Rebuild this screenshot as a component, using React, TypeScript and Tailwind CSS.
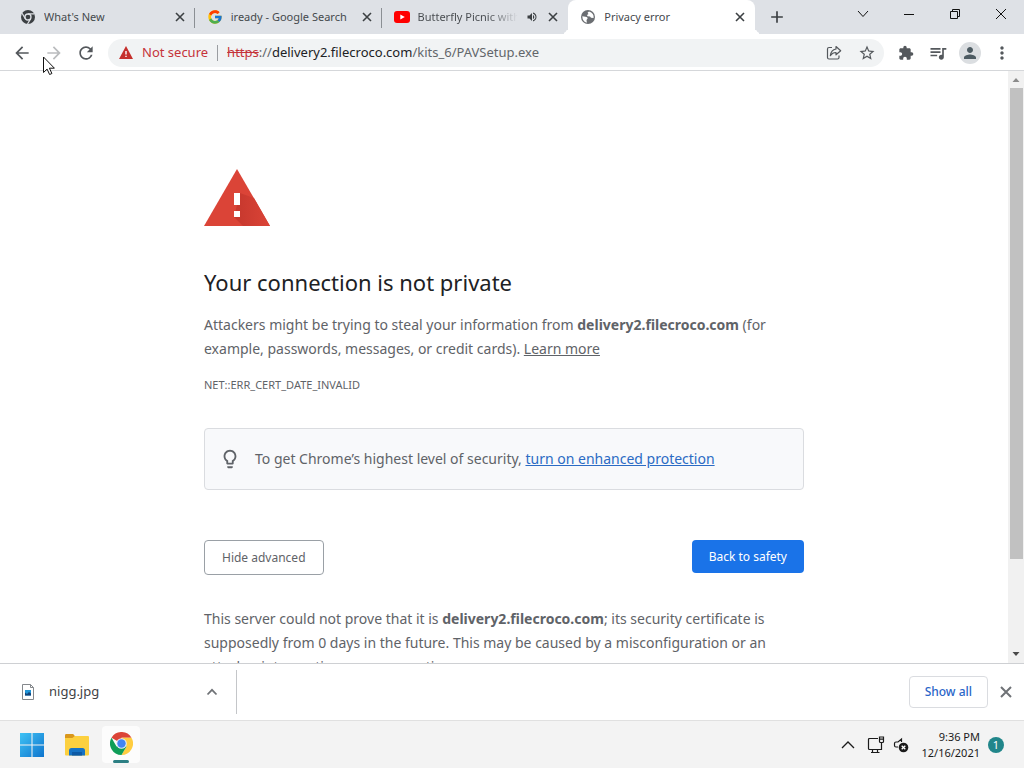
import React from 'react';
import {
    MdArrowBack,
    MdArrowForward,
    MdRefresh,
    MdStarBorder,
    MdExtension,
    MdQueueMusic,
    MdPerson,
    MdMoreVert,
    MdAdd,
    MdVolumeUp,
    MdLightbulbOutline,
} from 'react-icons/md';
import { FcGoogle } from 'react-icons/fc';

const ChromeGrey = () => (
    <svg viewBox="0 0 16 16" className="size-4 shrink-0">
        <circle cx="8" cy="8" r="7" fill="#3c4043" />
        <circle cx="8" cy="8" r="3" fill="#3c4043" stroke="#dee1e6" strokeWidth="1.3" />
        <path d="M8 4.9h6.4M5.3 9.6 2.1 4.3M10.7 9.6 7.5 15" stroke="#dee1e6" strokeWidth="1.2" />
    </svg>
);

const YouTube = () => (
    <svg viewBox="0 0 16 12" className="w-4 h-3 shrink-0">
        <rect width="16" height="12" rx="3" fill="#f00" />
        <path d="M6.3 3.4v5.2L10.8 6z" fill="#fff" />
    </svg>
);

const Globe = () => (
    <svg viewBox="0 0 16 16" className="size-4 shrink-0">
        <circle cx="8" cy="8" r="7" fill="#6b6e72" />
        <path d="M2.300 7.200 5.500 7.800Q7.800 8 7.600 9.600L6.500 11l.4 2.700Q2.400 12.500 2.300 7.200z" fill="#fff" />
        <path d="M9 2.400 7.500 3.800l1 1.300-1.500 1 .5 1.200 2.500.2 1 1.300 2.600.3Q14.200 4 9 2.400z" fill="#fff" />
    </svg>
);

const ChromeLogo = () => (
    <svg viewBox="0 0 48 48" className="size-[23px]">
        <path d="M24 24 3.2 12A24 24 0 0 1 44.8 12H24z" fill="#db4437" />
        <path d="M24 12h20.8A24 24 0 0 1 24 48l10.4-18z" fill="#ffcd40" />
        <path d="M3.2 12A24 24 0 0 0 24 48l10.4-18L24 24 13.6 30z" fill="#0f9d58" />
        <circle cx="24" cy="24" r="11" fill="#e8eef7" />
        <circle cx="24" cy="24" r="8.8" fill="#4285f4" />
    </svg>
);

const WindowsLogo = () => (
    <svg viewBox="0 0 23 23" className="size-6">
        <defs>
            <linearGradient id="win" x1="0" y1="0" x2="1" y2="1">
                <stop offset="0" stopColor="#3fc3f5" />
                <stop offset="1" stopColor="#0f74cd" />
            </linearGradient>
        </defs>
        <path d="M0 0h11v11H0zM12 0h11v11H12zM0 12h11v11H0zM12 12h11v11H12z" fill="url(#win)" />
    </svg>
);

const Folder = () => (
    <svg viewBox="0 0 24 22" className="w-6 h-[22px]">
        <path d="M0 1.2Q0 0 1.2 0h7l2 2.4L8 5H0z" fill="#d9971c" />
        <path d="M0 4h7.4l2.4-2H23q1 0 1 1v17.500q0 1-1 1H1q-1 0-1-1z" fill="#fcd03f" />
        <path d="M4 21.500v-5Q4 14 6.500 14h11q2.500 0 2.500 2.500v5z" fill="#1673c5" />
        <path d="M7 18h10v3.500H7z" fill="#0d5aa5" />
    </svg>
);

const tabs = [
    { title: "What's New", icon: <ChromeGrey /> },
    { title: 'iready - Google Search', icon: <FcGoogle className="size-4 shrink-0" /> },
    { title: 'Butterfly Picnic with', icon: <YouTube />, audio: true },
    { title: 'Privacy error', icon: <Globe />, active: true },
];

const TabStrip = () => (
    <div className="flex h-[34px] shrink-0 bg-[#dee1e6] pl-2">
        <div role="tablist" className="flex min-w-0 flex-1 max-w-[747px]">
            {tabs.map(({ title, icon, audio, active }, i) => (
                <div
                    key={title}
                    className={
                        active
                            ? 'relative flex flex-1 min-w-0 items-center rounded-t-lg bg-white pl-3 pr-2 before:absolute before:bottom-0 before:-left-2 before:size-2 before:rounded-br-lg before:shadow-[4px_4px_0_white] after:absolute after:bottom-0 after:-right-2 after:size-2 after:rounded-bl-lg after:shadow-[-4px_4px_0_white]'
                            : 'relative flex flex-1 min-w-0 items-center pl-3 pr-2'
                    }
                >
                    {icon}
                    <button role="tab" aria-selected={!!active} className="ml-2 flex-1 min-w-0 overflow-hidden whitespace-nowrap text-left text-[11px] text-[#45494d]">
                        <span className={audio ? 'block overflow-hidden bg-linear-to-r from-[#45494d] from-70% to-transparent bg-clip-text text-transparent' : ''}>
                            {title}
                        </span>
                    </button>
                    {audio && <MdVolumeUp className="ml-2 size-3 shrink-0 text-[#3c4043]" />}
                    <button aria-label={`Close ${title}`} className="ml-2 shrink-0 text-[#3c4043]">
                        <svg viewBox="0 0 14 14" className="size-[14px]" stroke="currentColor" strokeWidth="1.600"><path d="m3 3 8 8M11 3l-8 8" /></svg>
                    </button>
                    {i < 2 && <span className="absolute right-0 top-2 h-5 w-px bg-[#8b8f94]" />}
                </div>
            ))}
        </div>
        <button aria-label="New tab" className="ml-3 text-[#3c4043]">
            <MdAdd className="size-5" />
        </button>
        <div className="ml-auto flex h-7 items-center">
            <button aria-label="Search tabs" className="flex w-[46px] justify-center">
                <svg viewBox="0 0 12 8" className="w-3 h-2" fill="none" stroke="#111"><path d="m1 1 5 5.500L11 1" /></svg>
            </button>
            <button aria-label="Minimize" className="flex w-[46px] justify-center">
                <svg viewBox="0 0 10 10" className="size-[10px]" stroke="#111"><path d="M0 5.500h10" /></svg>
            </button>
            <button aria-label="Restore" className="flex w-[46px] justify-center">
                <svg viewBox="0 0 10 10" className="size-[10px]" fill="none" stroke="#111"><path d="M.5 2.500h7v7h-7zM2.500 2.500v-2h7v7h-2" /></svg>
            </button>
            <button aria-label="Close" className="flex w-[46px] justify-center">
                <svg viewBox="0 0 10 10" className="size-[10px]" stroke="#111"><path d="m0 0 10 10M10 0 0 10" /></svg>
            </button>
        </div>
    </div>
);

const Toolbar = () => (
    <div className="flex h-[37px] shrink-0 items-center border-b border-[#d5d7da] bg-white pl-3 pr-3 pt-px text-[#54585c]">
        <button aria-label="Back"><MdArrowBack className="size-5" /></button>
        <button aria-label="Forward" disabled className="ml-3 text-[#babcbe]"><MdArrowForward className="size-5" /></button>
        <button aria-label="Reload" className="ml-3"><MdRefresh className="size-5" /></button>
        <div className="ml-3 flex h-7 flex-1 min-w-0 items-center rounded-full bg-[#f1f3f4] pl-[11px] pr-2 text-[13px]">
            <button className="flex items-center text-[#c5343a]">
                <svg viewBox="0 0 14 13" className="mr-[9px] w-[14px] h-[13px]">
                    <path d="M7 0 14 13H0z" fill="#c5302c" />
                    <path d="M6.300 5h1.400v3.500H6.300zM6.300 9.700h1.400v1.400H6.300z" fill="#fff" />
                </svg>
                Not secure
            </button>
            <span className="mx-[9px] h-4 w-px bg-[#9a9da1]" />
            <div role="textbox" aria-label="Address" contentEditable suppressContentEditableWarning className="flex-1 min-w-0 truncate text-[#62666a] outline-none">
                <span className="text-[#c5343a] line-through">https</span>
                ://<span className="text-[#202124]">delivery2.filecroco.com</span>/kits_6/PAVSetup.exe
            </div>
            <button aria-label="Share this page">
                <svg viewBox="0 0 16 16" className="size-4" fill="none" stroke="currentColor" strokeWidth="1.200" strokeLinejoin="round">
                    <path d="M6 2.500H3Q1.500 2.500 1.500 4v8.500Q1.500 14 3 14h8.500q1.500 0 1.500-1.500V10.500" />
                    <path d="M10 1.500 14.700 5.700 10 9.800V7.500Q6.500 7.400 4.300 10.700 5 5 10 4z" />
                </svg>
            </button>
            <button aria-label="Bookmark this page" className="ml-4"><MdStarBorder className="size-[18px]" /></button>
        </div>
        <button aria-label="Extensions" className="ml-[14px]"><MdExtension className="size-4" /></button>
        <button aria-label="Media controls" className="ml-[14px]"><MdQueueMusic className="size-5" /></button>
        <button aria-label="Profile" className="ml-[11px] flex size-[22px] items-center justify-center rounded-full bg-[#dbdee1] text-[#4d5b62]">
            <MdPerson className="size-[18px]" />
        </button>
        <button aria-label="Menu" className="ml-[11px]"><MdMoreVert className="size-5" /></button>
    </div>
);

const PrivacyError = () => (
    <main className="flex min-h-0 flex-1 overflow-hidden bg-white">
        <div className="min-w-0 flex-1 px-6">
            <div className="mx-auto max-w-[600px] pt-[98px] text-sm leading-6 text-[#5f6368]">
                <svg viewBox="0 0 66 57" className="w-[66px] h-[57px]">
                    <defs>
                        <linearGradient id="fold" x1="0" y1="0" x2="1" y2="0">
                            <stop offset="0" stopColor="#c5372d" />
                            <stop offset="1" stopColor="#db4437" />
                        </linearGradient>
                    </defs>
                    <path d="M33 0 66 57H0z" fill="#db4437" />
                    <path d="m36 24 14 5 16 28H39l-9-9z" fill="url(#fold)" />
                    <path d="M30 24h6v12h-6zM30 42h6v6h-6z" fill="#fff" />
                </svg>
                <h1 className="mt-10 text-[22px] leading-8 text-[#202124]">Your connection is not private</h1>
                <p className="mt-[15px]">
                    Attackers might be trying to steal your information from <b>delivery2.filecroco.com</b> (for example, passwords, messages, or credit cards).{' '}
                    <a href="#learn" className="underline">Learn more</a>
                </p>
                <p className="mt-[14px] text-[11px] leading-5">NET::ERR_CERT_DATE_INVALID</p>
                <div className="mt-[33px] flex items-center rounded border border-[#dadce0] bg-[#f8f9fb] px-[14px] py-[18px]">
                    <MdLightbulbOutline className="size-[22px] shrink-0" />
                    <p className="ml-[14px]">
                        To get Chrome’s highest level of security,{' '}
                        <a href="#enhanced" className="text-[#2b6bc4] underline">turn on enhanced protection</a>
                    </p>
                </div>
                <div className="mt-[50px] flex items-start justify-between text-xs">
                    <button className="h-[35px] rounded border border-[#9aa0a6] px-[17px]">Hide advanced</button>
                    <button className="h-[33px] rounded bg-[#1a73e8] px-[17px] text-white">Back to safety</button>
                </div>
                <p className="mt-8">
                    This server could not prove that it is <b>delivery2.filecroco.com</b>; its security certificate is supposedly from 0 days in the future. This may be caused by a misconfiguration or an attacker intercepting your connection.
                </p>
            </div>
        </div>
        {/* Scrollbar */}
        <div className="flex w-4 shrink-0 flex-col items-center bg-[#f1f1f1]">
            <svg viewBox="0 0 16 17" className="w-4 h-[17px] shrink-0"><path d="M4.500 11h7L8 7z" fill="#8b8b8b" /></svg>
            <div className="h-[79.5%] w-[13px] bg-[#c1c1c1]" />
            <svg viewBox="0 0 16 17" className="mt-auto w-4 h-[17px] shrink-0"><path d="M4.500 6h7L8 10z" fill="#4a4a4a" /></svg>
        </div>
    </main>
);

const DownloadShelf = () => (
    <div className="flex h-[57px] shrink-0 items-center border-t border-[#ced0d3] bg-white pr-2">
        <div className="flex h-11 w-[237px] items-center border-r border-[#c4c6c9] pl-5 pr-4">
            <svg viewBox="0 0 16 16" className="size-4">
                <path d="M2.500.5h8l3 3v12h-11z" fill="#fff" stroke="#85888c" />
                <path d="M10.500.5v3h3" fill="none" stroke="#85888c" />
                <path d="M5 6h6v5.500H5z" fill="#2196d8" />
                <path d="m5 8.500 2 1.500 2-2 2 1.500v2H5z" fill="#15457a" />
            </svg>
            <button className="ml-[13px] text-[13px] text-[#3f4246]">nigg.jpg</button>
            <button aria-label="Download options" className="ml-auto text-[#6f7276]">
                <svg viewBox="0 0 16 16" className="size-4" fill="none" stroke="currentColor" strokeWidth="1.800"><path d="m3.500 10.500 4.500-4.700 4.500 4.700" /></svg>
            </button>
        </div>
        <button className="ml-auto h-8 rounded border border-[#dadce0] px-[15px] text-xs font-medium text-[#2a66c8]">Show all</button>
        <button aria-label="Close downloads" className="ml-2 text-[#6f7276]">
            <svg viewBox="0 0 20 20" className="size-5" stroke="currentColor" strokeWidth="2"><path d="m5 5 10 10M15 5 5 15" /></svg>
        </button>
    </div>
);

const Taskbar = () => (
    <div className="flex h-12 shrink-0 items-center border-t border-[#e0e0e0] bg-[#f3f3f3] pl-5 pr-5 text-[#1b1b1b]">
        <button aria-label="Start"><WindowsLogo /></button>
        <button aria-label="File Explorer" className="ml-[21px]"><Folder /></button>
        <button aria-label="Google Chrome" className="ml-[13px] flex h-[37px] w-[38px] flex-col items-center justify-between rounded bg-[#fcfcfc] pt-[6px]">
            <ChromeLogo />
            <span className="h-[3px] w-4 rounded-full bg-[#2c7f83]" />
        </button>
        <button aria-label="Show hidden icons" className="ml-auto">
            <svg viewBox="0 0 14 14" className="size-[14px]" fill="none" stroke="currentColor" strokeWidth="1.300"><path d="m1 10 6-6 6 6" /></svg>
        </button>
        <button aria-label="Network" className="ml-3">
            <svg viewBox="0 0 18 18" className="size-[18px]" fill="none" stroke="currentColor" strokeWidth="1.200">
                <path d="M11 2.500H2.500q-1 0-1 1v9q0 1 1 1h12V7M5.500 13.500v3M10.500 13.500v3M4 16.500h8.500" />
                <path d="M12.500 1h4v4.500q0 1-1 1h-2q-1 0-1-1zM12.500 3.200h4" />
            </svg>
        </button>
        <button aria-label="Volume" className="ml-2">
            <svg viewBox="0 0 16 16" className="size-4">
                <path d="M8.500 5V2L5 5H3Q1.500 5 1.500 6.500v2Q1.500 10 3 10h2" fill="none" stroke="currentColor" strokeWidth="1.200" />
                <circle cx="10.500" cy="10.500" r="4.800" fill="currentColor" />
                <path d="m8.700 8.700 3.600 3.600M12.300 8.700l-3.600 3.600" stroke="#fff" strokeWidth="1.300" />
            </svg>
        </button>
        <button className="ml-3 text-right text-[11px] leading-4">9:36 PM<br />12/16/2021</button>
        <button aria-label="1 notification" className="ml-2 size-4 rounded-full bg-[#21868a] text-[11px] leading-4 text-white">1</button>
    </div>
);

const App = () => {
    return (
        <div className="relative flex h-screen flex-col overflow-hidden font-['Noto_Sans','Open_Sans',sans-serif]">
            <TabStrip />
            <Toolbar />
            <PrivacyError />
            <DownloadShelf />
            <Taskbar />
            {/* Mouse pointer */}
            <svg viewBox="0 0 12 19" className="pointer-events-none absolute left-[43px] top-14 w-3 h-[19px]">
                <path d="M.5 1v15.500l3.600-3.400 2.500 5.400 2.300-1-2.500-5.300h5z" fill="#fff" stroke="#111" />
            </svg>
        </div>
    );
};

export default App;
